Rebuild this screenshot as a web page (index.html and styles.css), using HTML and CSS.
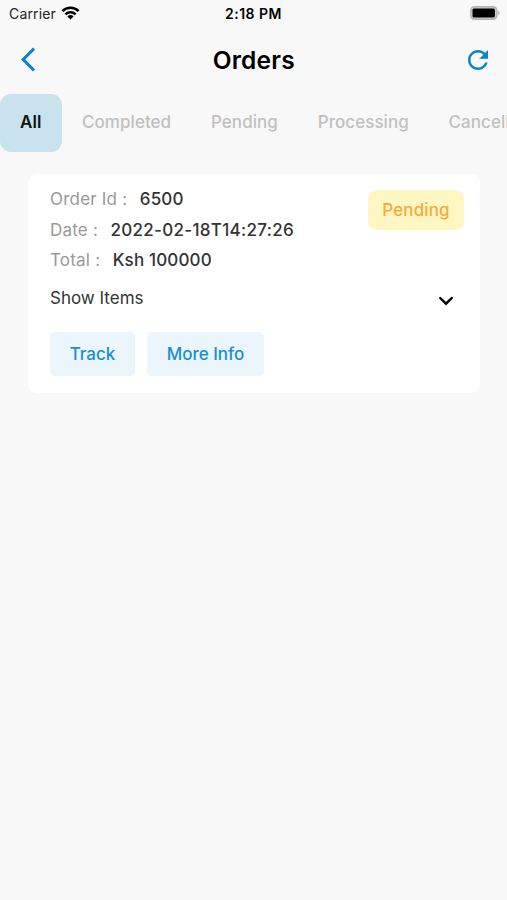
FILE: index.html
```html
<!DOCTYPE html>
<html lang="en">
<head>
    <meta charset="UTF-8">
    <meta name="viewport" content="width=device-width, initial-scale=1.0">
    <title>Orders</title>
    <link rel="stylesheet" href="styles.css">
</head>
<body>
    <div class="status-bar">
        <div class="carrier">
            <span>Carrier</span>
            <svg class="wifi" viewBox="0 0 18 14" width="19" height="14">
                <g fill="none" stroke="#000" stroke-width="2.5">
                    <path d="M0.9 5.1a11.5 11.5 0 0 1 16.2 0"/>
                    <path d="M3.9 8.3a7.2 7.2 0 0 1 10.2 0"/>
                </g>
                <path d="M9 13.6L5.9 10.4a4.4 4.4 0 0 1 6.2 0z"/>
            </svg>
        </div>
        <div class="time">2:18 PM</div>
        <svg class="battery" viewBox="0 0 30 14" width="30" height="14">
            <rect x="0.8" y="0.8" width="26" height="12.4" rx="3.6" fill="#ccc" stroke="#b4b4b4" stroke-width="1.4"/>
            <rect x="2.5" y="2.5" width="22.4" height="9" rx="1.6"/>
            <path d="M28.3 4.8c1.9.7 1.9 3.7 0 4.4z" fill="#b0b0b0"/>
        </svg>
    </div>

    <header class="header">
        <svg class="back" viewBox="0 0 12 24" width="14.5" height="29" fill="#0a84c9">
            <path d="M11.67 3.87L9.9 2.1 0 12l9.9 9.9 1.77-1.77L3.54 12z"/>
        </svg>
        <h1>Orders</h1>
        <svg class="refresh" viewBox="0 0 24 24" width="30" height="30" fill="#0a84c9">
            <path d="M17.65 6.35C16.2 4.9 14.21 4 12 4c-4.42 0-7.99 3.58-7.99 8s3.57 8 7.99 8c3.73 0 6.84-2.55 7.73-6h-2.08c-.82 2.33-3.04 4-5.65 4-3.31 0-6-2.69-6-6s2.69-6 6-6c1.66 0 3.14.69 4.22 1.78L13 11h7V4l-2.35 2.35z"/>
        </svg>
    </header>

    <nav class="tabs">
        <div class="tab active">All</div>
        <div class="tab">Completed</div>
        <div class="tab">Pending</div>
        <div class="tab">Processing</div>
        <div class="tab">Cancelled</div>
    </nav>

    <main class="order-card">
        <div class="order-top">
            <div class="details">
                <div class="row"><span class="label">Order Id :</span><span class="value">6500</span></div>
                <div class="row"><span class="label">Date :</span><span class="value date">2022-02-18T14:27:26</span></div>
                <div class="row"><span class="label">Total :</span><span class="value">Ksh 100000</span></div>
            </div>
            <div class="status">Pending</div>
        </div>
        <div class="show-items">
            <span>Show Items</span>
            <svg viewBox="0 0 16 10" width="16" height="10">
                <path d="M2.2 2L8 7.7 13.8 2" fill="none" stroke="#000" stroke-width="2.4" stroke-linecap="round"/>
            </svg>
        </div>
        <div class="actions">
            <div class="btn track">Track</div>
            <div class="btn info">More Info</div>
        </div>
    </main>
</body>
</html>
```
FILE: styles.css
```css
* {
    box-sizing: border-box;
}

body {
    margin: 0;
    height: 900px;
    background-color: #f8f8f8;
    color: #000;
    font-family: Inter, "Liberation Sans", sans-serif;
    overflow: hidden;
}

.status-bar {
    display: grid;
    grid-template-columns: 1fr auto 1fr;
    align-items: center;
    height: 27px;
    padding: 0 7px 0 9px;
    font-size: 14px;
}

.carrier {
    display: flex;
    align-items: center;
    gap: 5.5px;
    color: #222;
    letter-spacing: 0.15px;
}

.wifi {
    margin-top: -2px;
}

.time {
    margin-left: -2px;
    font-weight: 600;
    letter-spacing: 0.5px;
}

.battery {
    justify-self: end;
    margin-top: -1px;
}

.header {
    display: grid;
    grid-template-columns: 1fr auto 1fr;
    align-items: center;
    height: 65px;
    padding: 0 14px 0 20.5px;
}

h1 {
    margin: 0 0 0 -6px;
    font-size: 24.5px;
    font-weight: 600;
    letter-spacing: 0.2px;
}

.refresh {
    justify-self: end;
}

.tabs {
    display: flex;
    height: 59px;
    margin-top: 2px;
    overflow: hidden;
}

.tab {
    flex: none;
    display: flex;
    align-items: center;
    padding: 0 19.8px 3px 20px;
    height: 58px;
    font-size: 17px;
    font-weight: 500;
    letter-spacing: 0.05px;
    color: #c0c0c0;
}

.tab.active {
    width: 62px;
    background-color: #c8e3ee;
    border-radius: 11px;
    color: #111;
    font-weight: 600;
}

.order-card {
    width: 452px;
    height: 219px;
    margin: 21px 0 0 28px;
    padding: 10px 16px 0 22px;
    background-color: #fff;
    border-radius: 9px;
}

.order-top {
    display: flex;
    justify-content: space-between;
    align-items: flex-start;
}

.row {
    display: flex;
    gap: 12.5px;
    height: 30.5px;
    line-height: 30px;
    font-size: 17px;
    font-weight: 500;
    letter-spacing: 0.15px;
}

.label {
    color: #999;
    font-weight: 400;
    letter-spacing: 0.2px;
}

.value {
    color: #333;
}

.date {
    letter-spacing: 0.3px;
}

.status {
    width: 96px;
    height: 40px;
    margin-top: 6px;
    border-radius: 9px;
    background-color: #fff7c2;
    color: #f9a938;
    font-size: 17px;
    font-weight: 500;
    line-height: 40px;
    letter-spacing: 0.1px;
    text-align: center;
}

.show-items {
    display: flex;
    align-items: center;
    justify-content: space-between;
    height: 30px;
    margin-top: 7px;
    padding-right: 10px;
    color: #333;
    font-size: 17px;
}

.show-items svg {
    margin-top: 6px;
}

.actions {
    display: flex;
    gap: 12px;
    margin-top: 19px;
}

.btn {
    height: 44px;
    border-radius: 5px;
    background-color: #eaf6fc;
    color: #1a8fd0;
    font-size: 17px;
    font-weight: 500;
    line-height: 44px;
    text-align: center;
}

.track {
    width: 85px;
}

.info {
    width: 117px;
}
```
